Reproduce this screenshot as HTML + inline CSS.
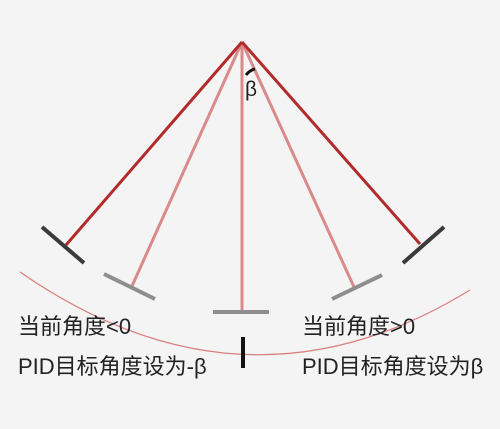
<!DOCTYPE html>
<html><head><style>
body{margin:0;background:#f4f4f4;}
svg{display:block}
text{font-family:"Liberation Sans","Noto Sans CJK SC",sans-serif;font-size:22px;fill:#222}
</style></head><body>
<svg width="500" height="429" viewBox="0 0 500 429">
<path d="M20,272 Q245,428 470,290" fill="none" stroke="#d98080" stroke-width="1.3"/>
<g stroke="#d98a8a" stroke-width="3">
<line x1="242" y1="42" x2="132" y2="286"/>
<line x1="242" y1="42" x2="354" y2="287"/>
<line x1="242" y1="42" x2="242" y2="312"/>
</g>
<g stroke="#b22a2a" stroke-width="3">
<line x1="242" y1="42" x2="66" y2="245"/>
<line x1="242" y1="42" x2="420" y2="244"/>
</g>
<g stroke="#3a3a3a" stroke-width="4">
<line x1="42" y1="227" x2="84" y2="263"/>
<line x1="403" y1="263" x2="444" y2="227"/>
</g>
<g stroke="#8e8e8e" stroke-width="4">
<line x1="104" y1="274" x2="155" y2="299"/>
<line x1="332" y1="299" x2="382" y2="275"/>
<line x1="213" y1="312" x2="269" y2="312"/>
</g>
<line x1="243" y1="337" x2="243" y2="368" stroke="#111" stroke-width="4"/>
<path d="M246,75 Q250,70 255,69" stroke="#111" stroke-width="3" fill="none"/>
<text x="245" y="96" style="font-size:21px">β</text>
<text x="18" y="334">当前角度&lt;0</text>
<text x="18" y="374">PID目标角度设为-β</text>
<text x="302" y="334">当前角度&gt;0</text>
<text x="302" y="374">PID目标角度设为β</text>
</svg>
</body></html>
